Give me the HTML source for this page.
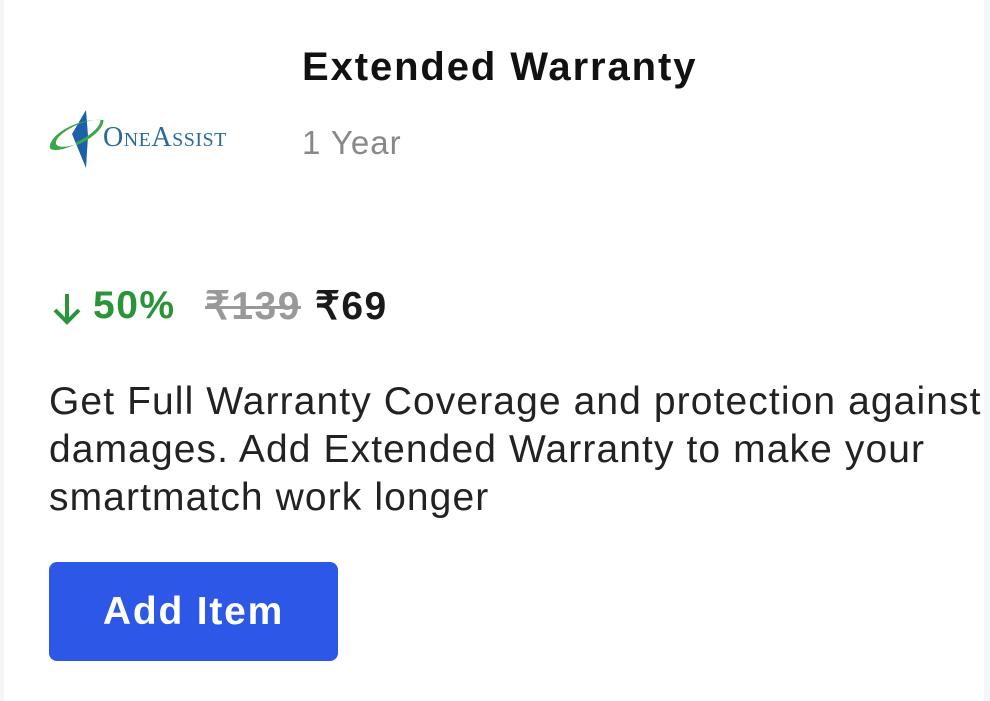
<!DOCTYPE html>
<html><head><style>
body{margin:0;width:990px;height:701px;background:#fff;font-family:"Liberation Sans",sans-serif;position:relative;overflow:hidden}
.edge{position:absolute;right:0;top:0;width:6px;height:701px;background:#f3f6fb}
.ledge{position:absolute;left:0;top:0;width:4px;height:701px;background:#f5f5f5}
.t{position:absolute;left:302px;top:45px;font-size:40px;font-weight:bold;color:#111;letter-spacing:1.9px}
.y{position:absolute;left:302px;top:124px;font-size:33px;color:#888;letter-spacing:1px}
.p{position:absolute;left:50px;top:284px;font-size:39px;font-weight:bold;white-space:nowrap;letter-spacing:1.5px}
.g{color:#2a9438;position:absolute;left:43px}.s{color:#999;text-decoration:line-through;text-decoration-thickness:3px;position:absolute;left:155px}.n{color:#1a1a1a;position:absolute;left:265px}
.d{position:absolute;left:49px;top:378px;font-size:39px;line-height:48px;color:#222;width:945px;letter-spacing:1.1px}
.b{position:absolute;left:49px;top:562px;width:289px;height:99px;background:#2d57e6;border-radius:8px;color:#fff;font-size:39px;font-weight:bold;text-align:center;line-height:99px;letter-spacing:1.8px}
.logo{position:absolute;left:46px;top:106px}
</style></head><body>
<div class="ledge"></div><div class="edge"></div>
<div class="t">Extended Warranty</div>
<div class="y">1 Year</div>
<svg class="logo" width="190" height="66" viewBox="0 0 190 66">
<polygon points="40,4 26,28 40,62 42,30" fill="#1d5fa8"/>
<path d="M4,42 C2,30 30,12 56,14 C40,12 12,26 10,36 C9,42 20,42 30,38 C18,44 6,46 4,42Z" fill="#3aa84a"/>
<path d="M30,38 C44,32 56,22 56,14" fill="none" stroke="#3aa84a" stroke-width="3"/>
<text x="57" y="40" font-family="Liberation Serif,serif" font-size="28" fill="#2a6a9a" letter-spacing="0.5">O<tspan font-size="20">NE</tspan>A<tspan font-size="20">SSIST</tspan></text>
</svg>
<div class="p"><svg style="position:absolute;left:2px;top:8px" width="30" height="34" viewBox="0 0 30 34"><path d="M15 2V30M3 18L15 30L27 18" fill="none" stroke="#2a9438" stroke-width="4"/></svg><span class="g">50%</span><span class="s">₹139</span><span class="n">₹69</span></div>
<div class="d">Get Full Warranty Coverage and protection against damages. Add Extended Warranty to make your smartmatch work longer</div>
<div class="b">Add Item</div>
</body></html>
